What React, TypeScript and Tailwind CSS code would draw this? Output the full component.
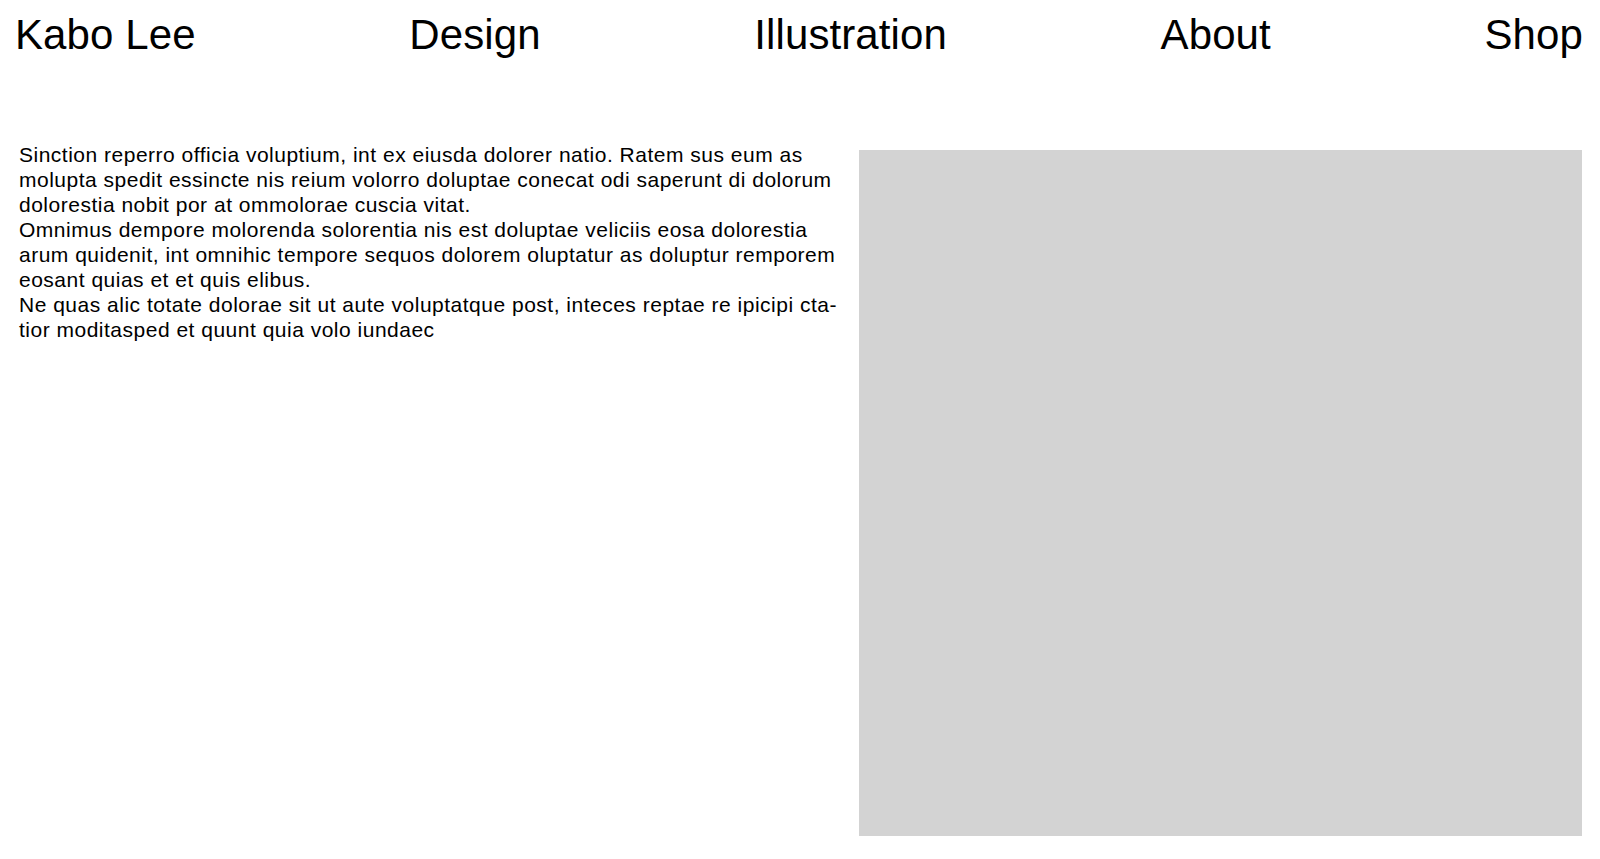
const navItems = ['Kabo Lee', 'Design', 'Illustration', 'About', 'Shop'];

// line breaks follow the layout in the design file
const paragraphs = [
    [
        'Sinction reperro officia voluptium, int ex eiusda dolorer natio. Ratem sus eum as',
        'molupta spedit essincte nis reium volorro doluptae conecat odi saperunt di dolorum',
        'dolorestia nobit por at ommolorae cuscia vitat.',
    ],
    [
        'Omnimus dempore molorenda solorentia nis est doluptae veliciis eosa dolorestia',
        'arum quidenit, int omnihic tempore sequos dolorem oluptatur as doluptur remporem',
        'eosant quias et et quis elibus.',
    ],
    [
        'Ne quas alic totate dolorae sit ut aute voluptatque post, inteces reptae re ipicipi cta-',
        'tior moditasped et quunt quia volo iundaec',
    ],
];

const App = () => {
    return (
        <div className="min-h-screen bg-white text-black font-['Liberation_Sans',Arial,sans-serif]">
            <header className="flex items-start justify-between pl-[15px] pr-[17px] pt-[14px]">
                {navItems.map((item) => (
                    <a key={item} href="#" className="text-[42px] leading-none tracking-[0.1px]">
                        {item}
                    </a>
                ))}
            </header>

            <main className="flex items-start gap-[18px] pl-[19px] pr-[18px] pt-[86px]">
                <div className="flex-1 whitespace-nowrap text-[21px] leading-[25px] tracking-[0.5px]">
                    {paragraphs.map((lines, i) => (
                        <p key={i}>
                            {lines.map((line, j) => (
                                <span key={j} className="block">
                                    {line}
                                </span>
                            ))}
                        </p>
                    ))}
                </div>
                <div className="mt-[8px] h-[686px] w-[723px] shrink-0 bg-[#d3d3d3]" />
            </main>
        </div>
    );
};

export default App;
